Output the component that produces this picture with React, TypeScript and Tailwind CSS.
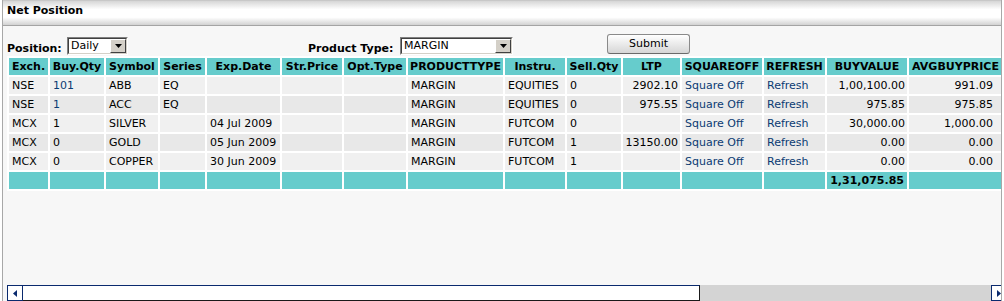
import React from "react";

type Row = {
  exch: string;
  buyQty: string;
  qtyLink?: boolean;
  symbol: string;
  series: string;
  exp: string;
  ltp: string;
  instru: string;
  sellQty: string;
  buyValue: string;
  avg: string;
};

const rows: Row[] = [
  { exch: "NSE", buyQty: "101", qtyLink: true, symbol: "ABB", series: "EQ", exp: "", instru: "EQUITIES", sellQty: "0", ltp: "2902.10", buyValue: "1,00,100.00", avg: "991.09" },
  { exch: "NSE", buyQty: "1", qtyLink: true, symbol: "ACC", series: "EQ", exp: "", instru: "EQUITIES", sellQty: "0", ltp: "975.55", buyValue: "975.85", avg: "975.85" },
  { exch: "MCX", buyQty: "1", symbol: "SILVER", series: "", exp: "04 Jul 2009", instru: "FUTCOM", sellQty: "0", ltp: "", buyValue: "30,000.00", avg: "1,000.00" },
  { exch: "MCX", buyQty: "0", symbol: "GOLD", series: "", exp: "05 Jun 2009", instru: "FUTCOM", sellQty: "1", ltp: "13150.00", buyValue: "0.00", avg: "0.00" },
  { exch: "MCX", buyQty: "0", symbol: "COPPER", series: "", exp: "30 Jun 2009", instru: "FUTCOM", sellQty: "1", ltp: "", buyValue: "0.00", avg: "0.00" },
];

const headers = [
  { label: "Exch.", w: 39 },
  { label: "Buy.Qty", w: 54 },
  { label: "Symbol", w: 52 },
  { label: "Series", w: 45 },
  { label: "Exp.Date", w: 73 },
  { label: "Str.Price", w: 60 },
  { label: "Opt.Type", w: 62 },
  { label: "PRODUCTTYPE", w: 95 },
  { label: "Instru.", w: 60 },
  { label: "Sell.Qty", w: 54 },
  { label: "LTP", w: 57 },
  { label: "SQUAREOFF", w: 80 },
  { label: "REFRESH", w: 61 },
  { label: "BUYVALUE", w: 80 },
  { label: "AVGBUYPRICE", w: 93 },
];

const Arrow = () => (
  <div className="flex w-[16px] h-full items-center justify-center bg-[#d4d0c8] border border-t-white border-l-white border-b-[#404040] border-r-[#404040]">
    <svg width="7" height="4" viewBox="0 0 7 4">
      <polygon points="0,0 7,0 3.5,4" fill="#000" />
    </svg>
  </div>
);

const FakeSelect = ({ value, className }: { value: string; className: string }) => (
  <div className={"h-[18px] border border-t-[#808080] border-l-[#808080] border-b-white border-r-white " + className}>
    <div className="flex h-full border border-t-[#404040] border-l-[#404040] border-b-[#d4d0c8] border-r-[#d4d0c8] bg-white">
      <span className="flex-1 pl-[2px] leading-[14px] text-[11px] text-black">{value}</span>
      <Arrow />
    </div>
  </div>
);

const td = "h-[17px] px-[3px] leading-[17px] whitespace-nowrap overflow-hidden";
const num = "h-[17px] pr-[2px] text-right leading-[17px] whitespace-nowrap overflow-hidden";

export default function App() {
  return (
    <div className="w-[1004px] h-[301px] overflow-hidden bg-white font-['DejaVu_Sans',Verdana,sans-serif] text-[11px] text-black">
      <div className="ml-[2px] w-[1000px] h-full border-x border-[#a8a8a8] bg-[#f7f7f7] flex flex-col">
        {/* title bar */}
        <div className="h-[26px] shrink-0 border-t border-t-[#c8c8c8] border-b border-b-[#a4a4a4] bg-[linear-gradient(to_bottom,#d6d6d6_0%,#ffffff_35%,#ffffff_68%,#d2d2d2_100%)] pl-[4px] pt-[2px]">
          <span className="font-bold leading-[14px]">Net Position</span>
        </div>

        {/* filters */}
        <div className="h-[30px] shrink-0 flex items-end pl-[4px]">
          <div className="w-[301px] flex items-end">
            <span className="w-[60px] font-bold leading-[14px]">Position:</span>
            <FakeSelect value="Daily" className="w-[61px] mb-[1px]" />
          </div>
          <div className="w-[299px] flex items-end">
            <span className="w-[92px] font-bold leading-[14px]">Product Type:</span>
            <FakeSelect value="MARGIN" className="w-[113px] mb-[1px]" />
          </div>
          <button className="w-[83px] h-[20px] mb-[2px] rounded-[3px] border border-[#8a8a8a] border-b-[#6a6a6a] bg-linear-to-b from-white to-[#d6d6d6] text-[11px] leading-[18px] text-black">
            Submit
          </button>
        </div>

        {/* table */}
        <div className="ml-[4px] w-[994px] h-[229px] shrink-0 overflow-hidden">
          <table className="table-fixed w-[997px] border-separate border-spacing-[2px] bg-white">
            <colgroup>
              {headers.map((h) => (
                <col key={h.label} style={{ width: h.w }} />
              ))}
            </colgroup>
            <thead>
              <tr>
                {headers.map((h) => (
                  <th key={h.label} className="h-[17px] bg-[#66cccc] text-center font-bold leading-[17px] whitespace-nowrap">
                    {h.label}
                  </th>
                ))}
              </tr>
            </thead>
            <tbody>
              {rows.map((r, i) => (
                <tr key={r.symbol} className={i % 2 === 0 ? "bg-[#f0f0f0]" : "bg-[#e8e8e8]"}>
                  <td className={td}>{r.exch}</td>
                  <td className={td + (r.qtyLink ? " text-[#0b3b73]" : "")}>{r.buyQty}</td>
                  <td className={td}>{r.symbol}</td>
                  <td className={td}>{r.series}</td>
                  <td className={td}>{r.exp}</td>
                  <td className={td}></td>
                  <td className={td}></td>
                  <td className={td}>MARGIN</td>
                  <td className={td}>{r.instru}</td>
                  <td className={td}>{r.sellQty}</td>
                  <td className={num}>{r.ltp}</td>
                  <td className={td + " text-[#0b3b73]"}>Square Off</td>
                  <td className={td + " text-[#0b3b73]"}>Refresh</td>
                  <td className={num}>{r.buyValue}</td>
                  <td className={num + " pr-[9px]"}>{r.avg}</td>
                </tr>
              ))}
              <tr className="bg-[#66cccc]">
                {headers.map((h) =>
                  h.label === "BUYVALUE" ? (
                    <td key={h.label} className="h-[17px] pr-[3px] text-right font-bold leading-[17px]">
                      1,31,075.85
                    </td>
                  ) : (
                    <td key={h.label} className="h-[17px]"></td>
                  )
                )}
              </tr>
            </tbody>
          </table>
        </div>

        {/* horizontal scrollbar */}
        <div className="ml-[4px] w-[994px] h-[16px] shrink-0 overflow-hidden flex">
          <div className="w-[16px] h-full shrink-0 flex items-center justify-center border border-[#0a2a6e] bg-white">
            <svg width="4" height="7" viewBox="0 0 4 7">
              <polygon points="4,0 4,7 0,3.5" fill="#0a2a6e" />
            </svg>
          </div>
          <div className="w-[677px] h-full shrink-0 border-y border-r border-t-[#0a2a6e] border-b-[#1a1a1a] border-r-[#1a1a1a] bg-white" />
          <div className="w-[291px] h-full shrink-0 bg-[#d4d4d4]" />
          <div className="w-[16px] h-full shrink-0 flex items-center justify-center border border-[#0a2a6e] bg-white">
            <svg width="4" height="7" viewBox="0 0 4 7">
              <polygon points="0,0 0,7 4,3.5" fill="#0a2a6e" />
            </svg>
          </div>
        </div>
      </div>
    </div>
  );
}
